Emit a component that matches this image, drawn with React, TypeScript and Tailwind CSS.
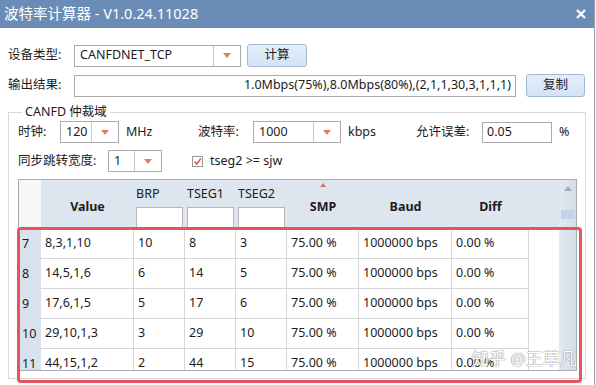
function Arrow() {
    return <div className="w-0 h-0 border-l-[4px] border-r-[4px] border-t-[5px] border-l-transparent border-r-transparent border-t-[#e27a6c]" />;
}

function Combo({width, text}: {width: string; text: string}) {
    return (
        <div className={`${width} h-[22px] flex border border-[#ababab] bg-white`}>
            <div className="flex-1 flex items-center pl-[5px]">{text}</div>
            <div className="w-[27px] flex items-center justify-center border-l border-[#c8c8c8]">
                <Arrow/>
            </div>
        </div>
    );
}

function Btn({width, text}: {width: string; text: string}) {
    return (
        <div className={`${width} h-[23px] flex items-center justify-center rounded-[3px] border border-[#a3b9d2] bg-gradient-to-b from-[#e4eefa] to-[#d3e4f6]`}>
            {text}
        </div>
    );
}

const rows = [
    ['7', '8,3,1,10', '10', '8', '3'],
    ['8', '14,5,1,6', '6', '14', '5'],
    ['9', '17,6,1,5', '5', '17', '6'],
    ['10', '29,10,1,3', '3', '29', '10'],
    ['11', '44,15,1,2', '2', '44', '15'],
];

function Cell({width, text}: {width: string; text: string}) {
    return (
        <div className={`${width} h-full flex items-center pl-[4px] border-r border-[#d6d6d6]`}>{text}</div>
    );
}

function HeadInput({label}: {label: string}) {
    return (
        <div className="w-[51px] flex flex-col px-[2px]">
            <div className="h-[27px] flex items-center pt-[2px]">{label}</div>
            <div className="h-[21px] bg-white border border-[#b8b8b8]" />
        </div>
    );
}

export default function App() {
    return (
        <div className="relative w-[596px] h-[385px] overflow-hidden bg-[#f3f3f3] text-[12.5px] text-[#1c1c1c] font-['Noto_Sans','Noto_Sans_CJK_SC',sans-serif]">
            <div className="w-[595px] h-[385px] bg-white border-r border-[#9aa3ad]">
                <div className="h-[28px] bg-[#6a8cb6] flex items-center justify-between pl-[4px] pr-[8px] text-white text-[14.5px]">
                    <span>波特率计算器 - V1.0.24.11028</span>
                    <svg width="10" height="10" viewBox="0 0 10 10">
                        <path d="M1 1 L9 9 M9 1 L1 9" stroke="white" strokeWidth="2.2"/>
                    </svg>
                </div>

                <div className="pt-[16px]">
                    <div className="flex items-center h-[23px]">
                        <span className="w-[74px] pl-[8px]">设备类型:</span>
                        <Combo width="w-[167px]" text="CANFDNET_TCP"/>
                        <div className="ml-[6px]"><Btn width="w-[60px]" text="计算"/></div>
                    </div>

                    <div className="flex items-center h-[23px] mt-[7px]">
                        <span className="w-[74px] pl-[8px]">输出结果:</span>
                        <div className="w-[442px] h-[22px] border border-[#ababab] flex items-center justify-end pr-[4px]">
                            1.0Mbps(75%),8.0Mbps(80%),(2,1,1,30,3,1,1,1)
                        </div>
                        <div className="ml-[10px]"><Btn width="w-[59px]" text="复制"/></div>
                    </div>

                    <fieldset className="ml-[8px] mt-[6px] w-[578px] border border-[#d9d9d9] pl-[9px] pb-[7px]">
                        <legend className="ml-[4px] px-[3px] leading-[18px]">CANFD 仲裁域</legend>

                        <div className="flex items-center h-[22px]">
                            <span className="w-[42px]">时钟:</span>
                            <Combo width="w-[59px]" text="120"/>
                            <span className="w-[79px] pl-[7px]">MHz</span>
                            <span className="w-[55px]">波特率:</span>
                            <Combo width="w-[88px]" text="1000"/>
                            <span className="w-[75px] pl-[7px]">kbps</span>
                            <span className="w-[66px]">允许误差:</span>
                            <div className="w-[70px] h-[21px] border border-[#ababab] flex items-center pl-[4px]">0.05</div>
                            <span className="pl-[7px]">%</span>
                        </div>

                        <div className="flex items-center h-[22px] mt-[7px]">
                            <span className="w-[90px]">同步跳转宽度:</span>
                            <Combo width="w-[54px]" text="1"/>
                            <div className="ml-[30px] w-[11px] h-[11px] border border-[#9a9a9a] bg-white flex items-center justify-center">
                                <svg width="9" height="9" viewBox="0 0 9 9">
                                    <path d="M1.5 4.5 L3.8 7 L7.8 1.5" fill="none" stroke="#d9584c" strokeWidth="1.5"/>
                                </svg>
                            </div>
                            <span className="ml-[7px]">tseg2 &gt;= sjw</span>
                        </div>

                        <div className="mt-[7px] w-[559px] h-[192px] flex border border-[#a6adb5]">
                            <div className="w-[540px] flex flex-col overflow-hidden">
                                <div className="h-[49px] flex shrink-0 bg-[#dde5ee] border-b border-[#c9d2dc]">
                                    <div className="w-[22px] bg-[#f7f7f7]" />
                                    <div className="w-[93px] flex items-center justify-center pt-[6px] font-bold">Value</div>
                                    <HeadInput label="BRP"/>
                                    <HeadInput label="TSEG1"/>
                                    <HeadInput label="TSEG2"/>
                                    <div className="relative w-[72px] flex items-center justify-center pt-[6px] font-bold">
                                        SMP
                                        <div className="absolute top-[3px] left-[33px] w-0 h-0 border-l-[3px] border-r-[3px] border-b-[4px] border-l-transparent border-r-transparent border-b-[#e06c60]" />
                                    </div>
                                    <div className="w-[93px] flex items-center justify-center pt-[6px] font-bold">Baud</div>
                                    <div className="w-[77px] flex items-center justify-center pt-[6px] font-bold">Diff</div>
                                </div>
                                {rows.map((r) => (
                                    <div key={r[0]} className="h-[30px] flex shrink-0">
                                        <div className="w-[22px] h-full flex items-center pl-[3px] bg-[#d9e2ec]">{r[0]}</div>
                                        <div className="flex h-full border-b border-[#d6d6d6]">
                                            <Cell width="w-[93px]" text={r[1]}/>
                                            <Cell width="w-[51px]" text={r[2]}/>
                                            <Cell width="w-[51px]" text={r[3]}/>
                                            <Cell width="w-[51px]" text={r[4]}/>
                                            <Cell width="w-[72px]" text="75.00 %"/>
                                            <Cell width="w-[93px]" text="1000000 bps"/>
                                            <Cell width="w-[77px]" text="0.00 %"/>
                                        </div>
                                    </div>
                                ))}
                            </div>
                            <div className="w-[17px] ml-auto flex flex-col items-center bg-gradient-to-r from-[#e3e9f1] to-[#d3dde9]">
                                <div className="mt-[6px] w-0 h-0 border-l-[4px] border-r-[4px] border-b-[5px] border-l-transparent border-r-transparent border-b-[#a4adb8]" />
                                <div className="mt-[19px] w-[14px] h-[9px] bg-[#c3d3e8]" />
                            </div>
                        </div>
                    </fieldset>
                </div>
            </div>

            <div className="absolute left-[17px] top-[227px] w-[565px] h-[156px] rounded-[4px] border-[3px] border-[#e6525f]" />
            <div className="absolute left-[472px] top-[348px] whitespace-nowrap text-[17px] leading-[22px] text-white [text-shadow:0_0_1px_#7d8590,0_0_1px_#7d8590]">知乎 @王草凡</div>
        </div>
    );
}
